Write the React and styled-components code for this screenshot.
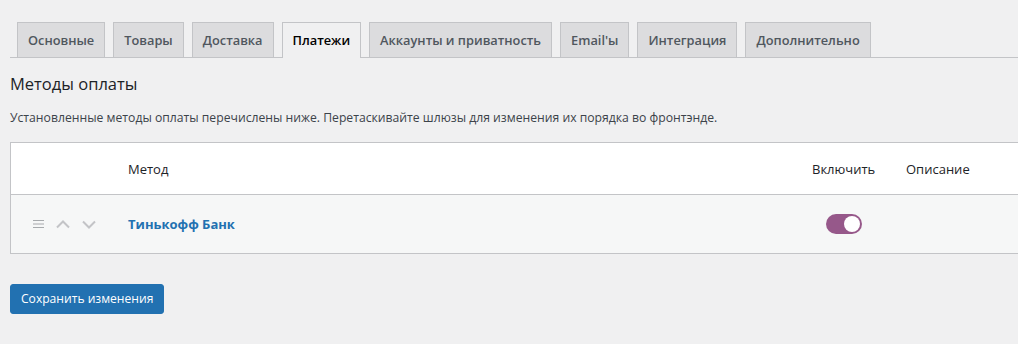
import React from 'react';
import styled, { createGlobalStyle } from 'styled-components';

const GlobalStyle = createGlobalStyle`
    html, body {
        margin : 0;
        padding : 0;
        background : #f0f0f1;
        overflow : hidden;
    }
    body {
        font-family : "Open Sans", "Noto Sans", sans-serif;
        color : #3c434a;
        font-size : 12px;
    }
`;

const Page = styled.div`
    padding : 22px 0 0 10px;
`;

// tabs
const TabBar = styled.nav`
    display : flex;
    gap : 8px;
    padding-left : 7px;
    border-bottom : 1px solid #c3c4c7;
`;

const Tab = styled.a`
    display : block;
    padding : 5px 10px;
    font-size : 12.8px;
    line-height : 24px;
    font-weight : 600;
    border : 1px solid #c3c4c7;
    border-bottom : 0;
    margin-bottom : ${p => (p.$active ? '-1px' : '0')};
    padding-bottom : ${p => (p.$active ? '6px' : '5px')};
    background : ${p => (p.$active ? '#f0f0f1' : '#dcdcde')};
    color : ${p => (p.$active ? '#000' : '#50575e')};
    text-decoration : none;
    white-space : nowrap;
`;

const Title = styled.h2`
    margin : 15px 0 0;
    font-size : 16.5px;
    line-height : 22px;
    font-weight : 500;
    color : #1d2327;
`;

const Desc = styled.p`
    margin : 13px 0 0;
    font-size : 12.2px;
    line-height : 20px;
    color : #3c434a;
`;

// table
const Table = styled.div`
    margin-top : 14px;
    width : calc(100% + 40px);
    border : 1px solid #c3c4c7;
    background : #fff;
`;

const Row = styled.div`
    display : grid;
    grid-template-columns : 107px 684px 94px 1fr;
    align-items : center;
    height : ${p => p.$h}px;
    background : ${p => p.$bg || '#fff'};
    border-top : ${p => (p.$line ? '1px solid #c3c4c7' : '0')};
`;

const Th = styled.div`
    padding-left : 10px;
    font-size : 13px;
    color : #1d2327;
`;

const SortCell = styled.div`
    display : flex;
    align-items : center;
    gap : 12px;
    padding-left : 22px;
`;

const Name = styled.a`
    padding-left : 10px;
    font-size : 13px;
    font-weight : 700;
    color : #2271b1;
    text-decoration : none;
`;

const ToggleCell = styled.div`
    padding-left : 24px;
    display : flex;
`;

const Toggle = styled.span`
    position : relative;
    display : block;
    width : 36px;
    height : 20px;
    border-radius : 10px;
    background : #96588a;
    &::after {
        content : "";
        position : absolute;
        right : 2px;
        top : 2px;
        width : 16px;
        height : 16px;
        border-radius : 50%;
        background : #fff;
    }
`;

const SaveButton = styled.button`
    display : block;
    margin-top : 30px;
    height : 30px;
    padding : 0 10px;
    background : #2271b1;
    border : 1px solid #2271b1;
    border-radius : 3px;
    color : #fff;
    font-family : inherit;
    font-size : 12.1px;
    line-height : 28px;
`;

const tabs = ['Основные', 'Товары', 'Доставка', 'Платежи', 'Аккаунты и приватность', "Email'ы", 'Интеграция', 'Дополнительно'];

const Handle = () => (
    <svg width="11" height="10" viewBox="0 0 11 10">
        <path d="M0 1.5h11M0 5h11M0 8.5h11" stroke="#a7aaad" strokeWidth="1.2" />
    </svg>
);

const Chevron = ({ down }) => (
    <svg width="14" height="9" viewBox="0 0 14 9">
        <path d={down ? 'M1 1.5l6 6 6-6' : 'M1 7.5l6-6 6 6'} fill="none" stroke="#c3c4c7" strokeWidth="2" />
    </svg>
);

export default function App() {
    return (
        <Page>
            <GlobalStyle />
            <TabBar>
                {tabs.map(t => (
                    <Tab key={t} href="#" $active={t === 'Платежи'}>{t}</Tab>
                ))}
            </TabBar>
            <Title>Методы оплаты</Title>
            <Desc>Установленные методы оплаты перечислены ниже. Перетаскивайте шлюзы для изменения их порядка во фронтэнде.</Desc>
            <Table>
                <Row $h={51}>
                    <div />
                    <Th>Метод</Th>
                    <Th>Включить</Th>
                    <Th>Описание</Th>
                </Row>
                <Row $h={58} $bg="#f6f7f7" $line>
                    <SortCell>
                        <Handle />
                        <Chevron />
                        <Chevron down />
                    </SortCell>
                    <Name href="#">Тинькофф Банк</Name>
                    <ToggleCell><Toggle /></ToggleCell>
                    <div />
                </Row>
            </Table>
            <SaveButton>Сохранить изменения</SaveButton>
        </Page>
    );
}
